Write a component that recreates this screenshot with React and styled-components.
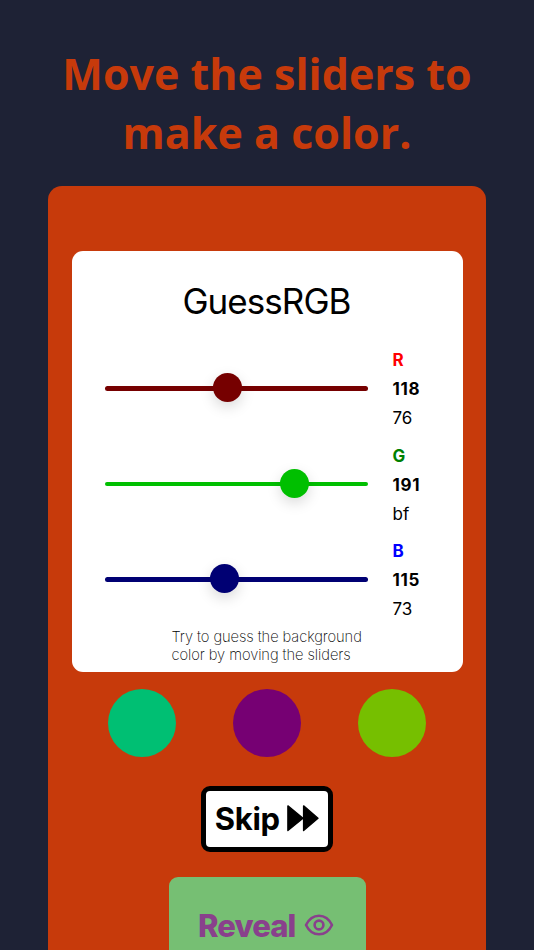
import React, { useState } from 'react'
import styled, { createGlobalStyle } from 'styled-components'

const MIN = 0;
const MAX = 255;

const ForwardIcon = () => (
  <svg width="32" height="27" viewBox="0 0 32 27" fill="currentColor" stroke="currentColor" strokeWidth="1.4" strokeLinejoin="round">
    <path d="M0.9 0.9L16 13.3L0.9 25.5Z" />
    <path d="M16.6 0.9L31 13.3L16.6 25.5Z" />
  </svg>
)

const EyeIcon = () => (
  <svg width="30" height="23" viewBox="0 0 30 23" fill="none" stroke="currentColor" strokeWidth="2.6">
    <path d="M2 11C4.9 5 9.5 1.7 15 1.7S25.1 5 28 11C25.1 17 20.5 20.3 15 20.3S4.9 17 2 11Z" strokeLinejoin="round" />
    <circle cx="15" cy="11" r="4.4" />
  </svg>
)

export default function App() {
  const [color, setColor] = useState({ r: 118, g: 191, b: 115 });
  const { r, g, b } = color;
  const channels = [
    { key: "r", label: "R", text: "red", track: `rgb(${r},0,0)` },
    { key: "g", label: "G", text: "green", track: `rgb(0,${g},0)` },
    { key: "b", label: "B", text: "blue", track: `rgb(0,0,${b})` },
  ]
  const mixes = [`rgb(0,${g},${b})`, `rgb(${r},0,${b})`, `rgb(${r},${g},0)`]
  return (
    <Page>
      <GlobalStyle />
      <Title>Move the sliders to make a color.</Title>
      <Panel>
        <Card>
          <Logo>GuessRGB</Logo>
          {channels.map((c) => (
            <Channel key={c.key}>
              <Slider
                type="range"
                min={MIN}
                max={MAX}
                value={color[c.key]}
                $color={c.track}
                aria-label={c.label}
                onChange={(e) => setColor({ ...color, [c.key]: Number(e.target.value) })}
              />
              <Values>
                <Letter $color={c.text}>{c.label}</Letter>
                <Decimal>{color[c.key]}</Decimal>
                <span>{color[c.key].toString(16).padStart(2, "0")}</span>
              </Values>
            </Channel>
          ))}
          <Hint>Try to guess the background color by moving the sliders</Hint>
        </Card>
        <Mixes>
          {mixes.map((m, i) => (
            <Dot key={i} $color={m} />
          ))}
        </Mixes>
        <SkipButton>
          Skip
          <ForwardIcon />
        </SkipButton>
        <RevealButton $bg={`rgb(${r},${g},${b})`} $fg={`rgb(${255 - r},${255 - g},${255 - b})`}>
          Reveal
          <EyeIcon />
        </RevealButton>
      </Panel>
    </Page>
  )
}

const GlobalStyle = createGlobalStyle`
  * {
    box-sizing: border-box;
  }
  body {
    margin: 0;
    background: #1e2235;
    font-family: Inter, sans-serif;
    color: #000;
  }
`;

const Page = styled.main`
  height: 950px;
  overflow: hidden;
  display: flex;
  flex-direction: column;
  align-items: center;
  padding: 45px 48px 0;
`;

const Title = styled.h1`
  margin: 0 0 24.4px;
  width: 430px;
  font-family: "Open Sans", sans-serif;
  font-size: 43px;
  line-height: 58.5px;
  font-weight: 700;
  text-align: center;
  color: #c73a0b;
`;

const Panel = styled.section`
  width: 438px;
  height: 900px;
  flex-shrink: 0;
  display: flex;
  flex-direction: column;
  align-items: center;
  padding-top: 65px;
  border-radius: 14px;
  background: #c73a0b;
`;

const Card = styled.div`
  width: 391px;
  height: 420.3px;
  flex-shrink: 0;
  display: flex;
  flex-direction: column;
  padding: 27.6px 33px 0;
  border-radius: 11px;
  background: #fff;
`;

const Logo = styled.h2`
  margin: 0 0 22.2px;
  padding-right: 1px;
  font-size: 35px;
  line-height: 44px;
  font-weight: 400;
  letter-spacing: -0.95px;
  text-align: center;
`;

const Channel = styled.div`
  display: flex;
  align-items: center;
  gap: 24.5px;
  height: 87px;
  margin-bottom: 8.4px;
`;

const Slider = styled.input`
  appearance: none;
  width: 263.5px;
  height: 4.5px;
  margin: 0;
  border-radius: 3px;
  background: ${(p) => p.$color};
  &::-webkit-slider-thumb {
    appearance: none;
    width: 29px;
    height: 29px;
    margin-top: -2px;
    border-radius: 50%;
    background: ${(p) => p.$color};
    box-shadow: 0 5px 14px rgba(0, 0, 0, 0.15);
    cursor: pointer;
  }
`;

const Values = styled.div`
  display: flex;
  flex-direction: column;
  padding-top: 2px;
  font-size: 17px;
  line-height: 29px;
`;

const Letter = styled.strong`
  color: ${(p) => p.$color};
`;

const Decimal = styled.strong`
  letter-spacing: 0.7px;
`;

const Hint = styled.p`
  margin: -3.4px 0 0 67px;
  width: 200px;
  font-size: 14.7px;
  line-height: 18px;
  font-weight: 200;
  letter-spacing: -0.07px;
`;

const Mixes = styled.div`
  width: 318px;
  display: flex;
  justify-content: space-between;
  margin: 17px 0 29px;
`;

const Dot = styled.div`
  width: 68px;
  height: 68px;
  border-radius: 50%;
  background: ${(p) => p.$color};
`;

const Button = styled.button`
  flex-shrink: 0;
  display: flex;
  align-items: center;
  justify-content: center;
  border: none;
  font-family: inherit;
  font-size: 31px;
  font-weight: 700;
  cursor: pointer;
`;

const SkipButton = styled(Button)`
  width: 132px;
  height: 66px;
  padding: 0;
  gap: 7.5px;
  border: 5px solid #000;
  border-radius: 9px;
  background: #fff;
  color: #000;
  letter-spacing: -0.3px;
`;

const RevealButton = styled(Button)`
  width: 197px;
  height: 98px;
  margin-top: 25px;
  padding: 0 2px 0 0;
  gap: 8.5px;
  border-radius: 9px;
  background: ${(p) => p.$bg};
  color: ${(p) => p.$fg};
  font-weight: 800;
  letter-spacing: -0.9px;
`;
